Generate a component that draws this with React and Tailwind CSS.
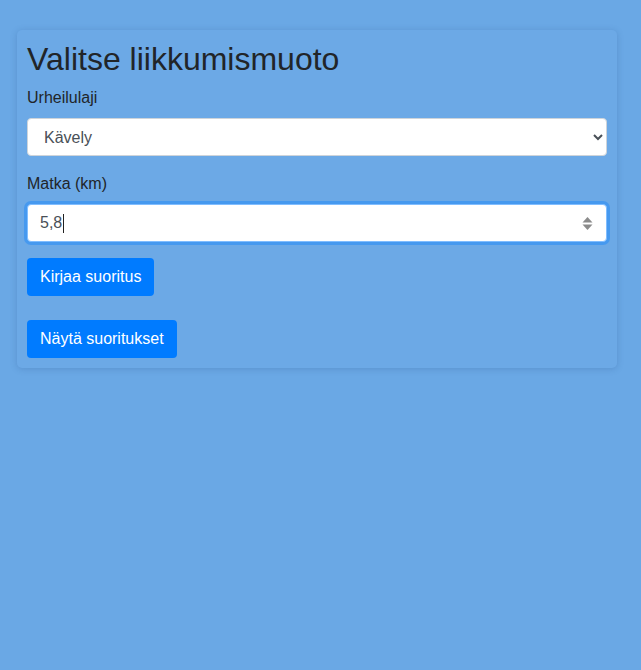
import { useState } from 'react';

const font = { fontFamily: '"Liberation Sans", Arial, sans-serif' };

const SpinArrows = () => (
  <svg className="absolute right-[12px] top-[11px]" width="13" height="15" viewBox="0 0 13 15">
    <path d="M6.5 1 L11.5 6.5 H1.5 Z" fill="#8b8b8b" />
    <path d="M6.5 14 L11.5 8.5 H1.5 Z" fill="#8b8b8b" />
  </svg>
);

const App = () => {
  const [laji, setLaji] = useState('Kävely');

  return (
    <div className="min-h-[670px] bg-[#6aa8e5] pt-[30px] text-[#212529]" style={font}>
      <div className="ml-[17px] w-[600px] rounded-[5px] bg-[#6ca9e6] p-[10px] shadow-[0_1px_6px_rgba(40,80,140,0.25)]">
        <h2 className="mb-2 text-[32px] font-normal leading-[1.2]">Valitse liikkumismuoto</h2>

        <form onSubmit={(e) => e.preventDefault()}>
          <div className="mb-4">
            <label className="mb-2 block text-base leading-6">Urheilulaji</label>
            <select
              value={laji}
              onChange={(e) => setLaji(e.target.value)}
              className="block h-[38px] w-full rounded-[4px] border border-[#ced4da] bg-white px-3 text-base text-[#495057]"
              style={font}
            >
              <option>Kävely</option>
              <option>Juoksu</option>
              <option>Pyöräily</option>
              <option>Uinti</option>
            </select>
          </div>

          <div className="mb-4">
            <label className="mb-2 block text-base leading-6">Matka (km)</label>
            <div className="relative flex h-[38px] w-full items-center rounded-[4px] border border-[#80bdff] bg-white px-3 text-base text-[#495057] shadow-[0_0_0_3px_rgba(0,123,255,0.35)]">
              <span>5,8</span>
              <span className="ml-px inline-block h-[19px] w-px bg-[#222]" />
              <SpinArrows />
            </div>
          </div>

          <button
            type="submit"
            className="h-[38px] rounded-[4px] bg-[#007bff] px-[13px] text-base leading-6 text-white"
          >
            Kirjaa suoritus
          </button>
        </form>

        <button className="mt-6 h-[38px] rounded-[4px] bg-[#007bff] px-[13px] text-base leading-6 text-white">
          Näytä suoritukset
        </button>
      </div>
    </div>
  );
};

export default App;
